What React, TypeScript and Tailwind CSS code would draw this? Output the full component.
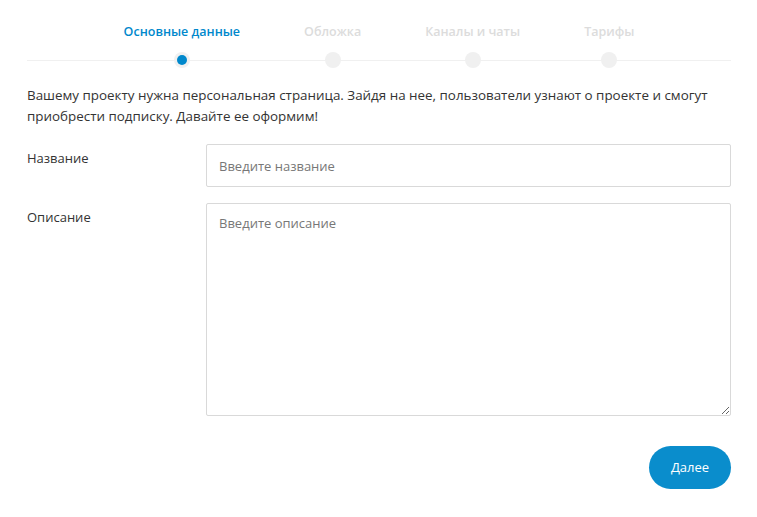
import React from "react";

const steps = ["Основные данные", "Обложка", "Каналы и чаты", "Тарифы"];

export default function App() {
  return (
    <div className="min-h-[517px] w-[757px] bg-white pl-[27px] pr-[26px] pt-[22px] font-['Open_Sans',sans-serif] text-[#333]">
      <div className="relative">
        <div className="absolute left-0 right-0 top-[38px] h-px bg-[#f0f0f0]" />
        <div className="relative flex justify-center gap-16">
          {steps.map((s, i) => (
            <div key={s} className="flex flex-col items-center">
              <div
                className={`text-[12.5px] font-semibold leading-5 ${
                  i === 0 ? "text-[#0088cc]" : "text-[#dcdcdc]"
                }`}
              >
                {s}
              </div>
              <div className="mt-[10px] flex h-4 w-4 items-center justify-center rounded-full bg-[#f0f0f0]">
                {i === 0 && <div className="h-[10px] w-[10px] rounded-full bg-[#0088cc]" />}
              </div>
            </div>
          ))}
        </div>
      </div>

      <p className="mt-[17px] text-[13.4px] leading-[21px]">
        Вашему проекту нужна персональная страница. Зайдя на нее, пользователи узнают о проекте и смогут
        приобрести подписку. Давайте ее оформим!
      </p>

      <div className="mt-[17px] flex">
        <label className="w-[179px] pt-[5px] text-[13px]">Название</label>
        <input
          className="h-[43px] flex-1 rounded-[2px] border border-[#d9d9d9] px-3 text-[13px] outline-none placeholder:text-[#777]"
          placeholder="Введите название"
        />
      </div>

      <div className="mt-[16px] flex">
        <label className="w-[179px] pt-[5px] text-[13px]">Описание</label>
        <textarea
          className="h-[213px] flex-1 rounded-[2px] border border-[#d9d9d9] px-3 py-[10px] text-[13px] outline-none placeholder:text-[#777]"
          placeholder="Введите описание"
        />
      </div>

      <div className="mt-[30px] flex justify-end">
        <button className="h-[43px] w-[82px] rounded-full bg-[#0a8dcc] text-[13px] font-medium text-white">
          Далее
        </button>
      </div>
    </div>
  );
}
